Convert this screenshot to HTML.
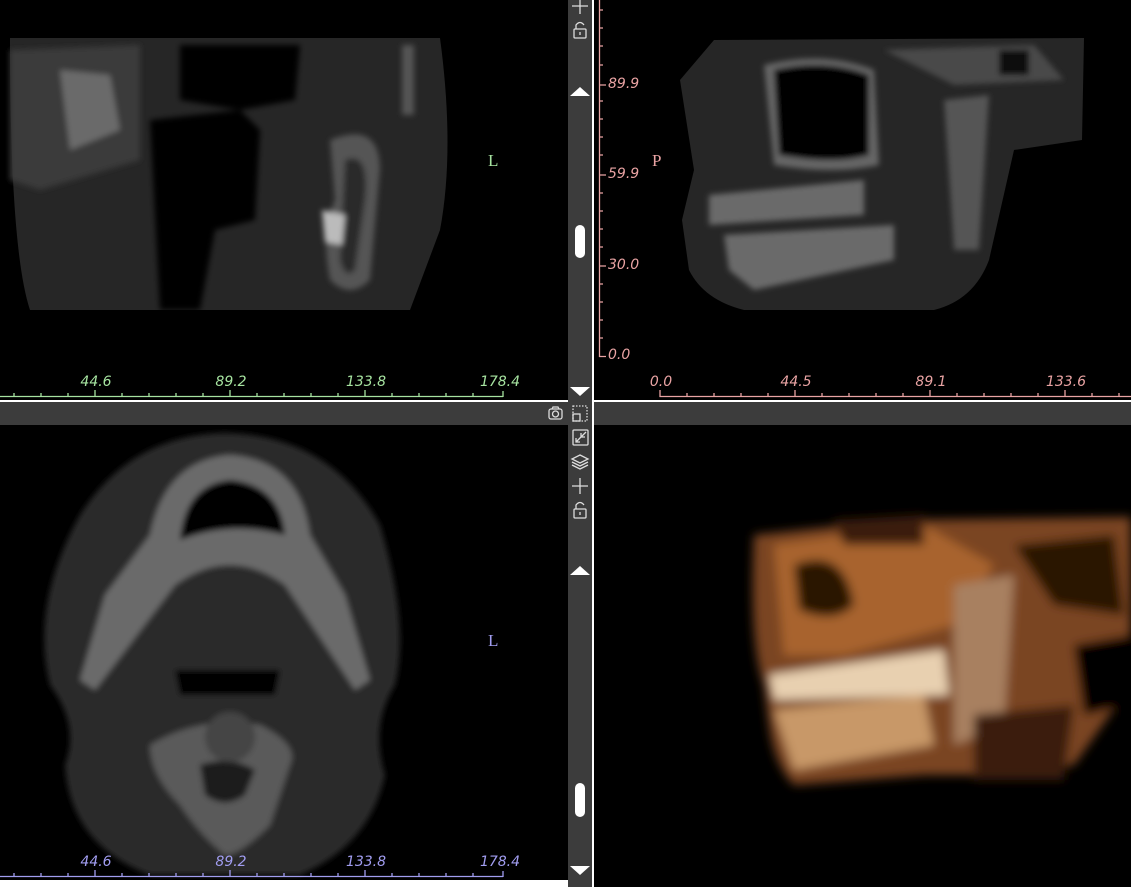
<!DOCTYPE html>
<html><head><meta charset="utf-8"><style>
html,body{margin:0;padding:0;background:#000;width:1131px;height:887px;overflow:hidden;position:relative;font-family:"DejaVu Sans","Liberation Sans",sans-serif}
.a{position:absolute}
.lbl{position:absolute;font-style:italic;font-size:14px;transform:translateX(-50%)}
.g{color:#a6e3a0}.p{color:#e9a3a3}.b{color:#a19df0}
</style></head><body>

<!-- top-left CT -->
<svg class="a" style="left:0;top:0" width="568" height="400">
<defs><filter id="bl"><feGaussianBlur stdDeviation="3"/></filter></defs>
<path d="M10 38 L440 38 Q455 150 440 230 L410 310 L30 310 Q10 250 10 38Z" fill="#262626"/>
<g filter="url(#bl)">
<path d="M10 50 L140 45 L140 160 L40 190 L10 180Z" fill="#3a3a3a"/>
<path d="M60 70 L110 75 L120 130 L70 150Z" fill="#6a6a6a"/>
<path d="M180 45 L300 45 L295 100 L240 110 L180 100Z" fill="#000"/>
<path d="M150 120 L240 110 L260 130 L255 220 L215 230 L200 310 L160 310Z" fill="#000"/>
<path d="M330 140 Q380 120 380 170 L370 280 Q350 300 330 280 Q320 230 335 200Z" fill="#555"/>
<path d="M345 160 Q370 150 365 200 L355 270 Q345 280 340 260Z" fill="#2a2a2a"/>
<path d="M322 210 L345 215 L342 245 L325 242Z" fill="#bbb"/>
<rect x="402" y="45" width="12" height="70" fill="#555"/>
</g>
</svg>
<div class="a g" style="left:488px;top:151px;font-family:'Liberation Serif',serif;font-size:17px">L</div>

<!-- top-right CT -->
<svg class="a" style="left:594px;top:0" width="537" height="400">
<path d="M86 80 L120 40 L490 38 L488 140 L420 150 L395 260 Q380 300 340 310 L150 310 Q110 300 95 270 L88 220 L100 170Z" fill="#262626"/>
<g filter="url(#bl)">
<path d="M170 65 Q230 50 280 70 L285 165 Q240 175 180 165Z" fill="#666"/>
<path d="M180 70 Q230 58 275 75 L275 155 Q240 165 185 155Z" fill="#000"/>
<path d="M115 195 L270 180 L270 215 L115 225Z" fill="#6a6a6a"/>
<path d="M130 235 L300 225 L300 260 L160 290 L135 270Z" fill="#6a6a6a"/>
<path d="M350 100 L395 95 L385 250 L360 250Z" fill="#555"/>
<path d="M290 50 L440 45 L470 80 L360 85Z" fill="#4a4a4a"/>
<rect x="405" y="50" width="30" height="25" fill="#111"/>
</g>
</svg>
<div class="a p" style="left:652px;top:151px;font-family:'Liberation Serif',serif;font-size:17px">P</div>

<!-- bottom-left CT axial -->
<svg class="a" style="left:0;top:425px" width="568" height="455">
<g filter="url(#bl)">
<path d="M225 8 Q330 10 380 100 Q410 200 395 260 Q370 300 385 350 Q370 420 300 450 L150 450 Q70 420 65 340 Q80 300 50 260 Q30 180 80 90 Q130 10 225 8Z" fill="#2a2a2a"/>
<path d="M230 30 Q300 35 310 110 L345 170 L370 255 L355 265 L285 160 Q230 120 175 160 L95 265 L80 255 L105 170 L150 110 Q165 35 230 30Z" fill="#6a6a6a"/>
<path d="M230 55 Q280 60 285 110 Q230 95 180 115 Q185 60 230 55Z" fill="#000"/>
<path d="M175 245 L280 245 L275 270 L180 270Z" fill="#000"/>
<path d="M150 320 Q200 290 260 300 Q300 320 290 340 L270 400 Q240 430 225 430 Q200 410 180 380 Q150 350 150 320Z" fill="#5a5a5a"/>
<path d="M200 340 Q230 330 255 345 L245 370 Q225 385 205 370Z" fill="#1a1a1a"/>
<circle cx="230" cy="312" r="25" fill="#444"/>
</g>
</svg>
<div class="a b" style="left:488px;top:631px;font-family:'Liberation Serif',serif;font-size:17px">L</div>

<!-- 3D render -->
<svg class="a" style="left:594px;top:425px" width="537" height="462">
<defs><filter id="b3"><feGaussianBlur stdDeviation="5"/></filter></defs>
<g filter="url(#b3)">
<path d="M160 110 L300 95 L537 92 L537 260 L480 340 L420 350 L370 350 L330 350 L200 360 Q180 340 175 300 L170 260 Q155 220 160 110Z" fill="#7a4420"/>
<path d="M180 120 L330 100 L400 140 L360 200 L250 230 L190 230Z" fill="#a8642e"/>
<path d="M200 140 Q250 120 260 180 Q240 200 205 185Z" fill="#2a1206"/>
<path d="M240 95 L330 90 L330 120 L250 120Z" fill="#3a1c08"/>
<path d="M420 120 L520 110 L530 190 L460 180Z" fill="#2a1406"/>
<path d="M175 250 L350 225 L355 270 L180 275Z" fill="#e8d0b0"/>
<path d="M180 285 L330 270 L340 320 L200 345Z" fill="#c89868"/>
<path d="M360 160 L420 150 L410 300 L360 320Z" fill="#a88060"/>
<path d="M380 290 L480 280 L470 355 L380 355Z" fill="#3a1c08"/>
<path d="M480 220 L537 210 L537 280 L490 290Z" fill="#000"/>
</g>
</svg>

<!-- horizontal divider -->
<div class="a" style="left:0;top:400px;width:1131px;height:2px;background:#fff"></div>
<div class="a" style="left:0;top:402px;width:1131px;height:23px;background:#3c3c3c"></div>
<!-- vertical strip -->
<div class="a" style="left:568px;top:0;width:24px;height:887px;background:#3c3c3c"></div>
<div class="a" style="left:592px;top:0;width:2px;height:887px;background:#fff"></div>
<div class="a" style="left:0;top:880px;width:568px;height:7px;background:#fff"></div>

<!-- strip icons -->
<svg class="a" style="left:540px;top:0" width="56" height="887" fill="none" stroke="#ddd" stroke-width="1.3">
<path d="M40 0 V14 M32 6 H48"/>
<rect x="34" y="29" width="12" height="9" rx="1"/><path d="M36 29 V25 Q40 20 44 25"/><path d="M40 32 V35"/>
<path d="M30 96 L40 87 L50 96Z" fill="#fff" stroke="none"/>
<rect x="35" y="225" width="10" height="33" rx="5" fill="#fff" stroke="none"/>
<path d="M30 387 L50 387 L40 396Z" fill="#fff" stroke="none"/>
<rect x="9" y="409" width="13" height="10" rx="2"/><circle cx="15.5" cy="414" r="3"/><path d="M12 409 L13 407 H18 L19 409"/>
<rect x="33" y="406" width="14" height="15" stroke-dasharray="1.5 1.5"/><rect x="33" y="414" width="7" height="7"/>
<rect x="33" y="430" width="15" height="15" rx="1"/><path d="M36 442 L41 437 M46 432 L41 437 M36 438 V442 H40 M41 433 V437 H45"/>
<path d="M40 455 L48 459 L40 463 L32 459Z M32 462 L40 466 L48 462 M32 465 L40 469 L48 465"/>
<path d="M40 478 V494 M32 486 H48"/>
<rect x="34" y="509" width="12" height="9" rx="1"/><path d="M36 509 V505 Q40 500 44 505"/><path d="M40 512 V515"/>
<path d="M30 575 L40 566 L50 575Z" fill="#fff" stroke="none"/>
<rect x="35" y="783" width="10" height="34" rx="5" fill="#fff" stroke="none"/>
<path d="M30 866 L50 866 L40 875Z" fill="#fff" stroke="none"/>
</svg>

<!-- rulers -->
<svg class="a" style="left:0;top:0" width="1131" height="887">
<g stroke="#a6e3a0" stroke-width="1.3">
<path d="M0 396.5 H503 M503 391 V397"/>
<path d="M95 390 V397 M230 390 V397 M365 390 V397 M14 393 V397 M41 393 V397 M68 393 V397 M122 393 V397 M149 393 V397 M176 393 V397 M203 393 V397 M257 393 V397 M284 393 V397 M311 393 V397 M338 393 V397 M392 393 V397 M419 393 V397 M446 393 V397 M473 393 V397"/>
</g>
<g stroke="#a19df0" stroke-width="1.3">
<path d="M0 876.5 H503 M503 871 V877"/>
<path d="M95 870 V877 M230 870 V877 M365 870 V877 M14 873 V877 M41 873 V877 M68 873 V877 M122 873 V877 M149 873 V877 M176 873 V877 M203 873 V877 M257 873 V877 M284 873 V877 M311 873 V877 M338 873 V877 M392 873 V877 M419 873 V877 M446 873 V877 M473 873 V877"/>
</g>
<g stroke="#e9a3a3" stroke-width="1.3">
<path d="M660 390 V396.5 H1131"/>
<path d="M795 390 V397 M930 390 V397 M1065 390 V397 M687 393 V397 M714 393 V397 M741 393 V397 M768 393 V397 M822 393 V397 M849 393 V397 M876 393 V397 M903 393 V397 M957 393 V397 M984 393 V397 M1011 393 V397 M1038 393 V397 M1092 393 V397 M1119 393 V397"/>
<path d="M599.5 0 V356.5 H606"/>
<path d="M599 85 H606 M599 175 H606 M599 266 H606 M599 10 H603 M599 28 H603 M599 46 H603 M599 65 H603 M599 101 H603 M599 119 H603 M599 137 H603 M599 155 H603 M599 193 H603 M599 211 H603 M599 229 H603 M599 247 H603 M599 284 H603 M599 302 H603 M599 320 H603 M599 338 H603"/>
</g>
</svg>
<div class="lbl g" style="left:96px;top:374px">44.6</div>
<div class="lbl g" style="left:231px;top:374px">89.2</div>
<div class="lbl g" style="left:366px;top:374px">133.8</div>
<div class="lbl g" style="left:500px;top:374px">178.4</div>
<div class="lbl b" style="left:96px;top:854px">44.6</div>
<div class="lbl b" style="left:231px;top:854px">89.2</div>
<div class="lbl b" style="left:366px;top:854px">133.8</div>
<div class="lbl b" style="left:500px;top:854px">178.4</div>
<div class="lbl p" style="left:661px;top:374px">0.0</div>
<div class="lbl p" style="left:796px;top:374px">44.5</div>
<div class="lbl p" style="left:931px;top:374px">89.1</div>
<div class="lbl p" style="left:1066px;top:374px">133.6</div>
<div class="a p" style="left:608px;top:76px;font-style:italic;font-size:14px">89.9</div>
<div class="a p" style="left:608px;top:166px;font-style:italic;font-size:14px">59.9</div>
<div class="a p" style="left:608px;top:257px;font-style:italic;font-size:14px">30.0</div>
<div class="a p" style="left:608px;top:347px;font-style:italic;font-size:14px">0.0</div>
</body></html>
